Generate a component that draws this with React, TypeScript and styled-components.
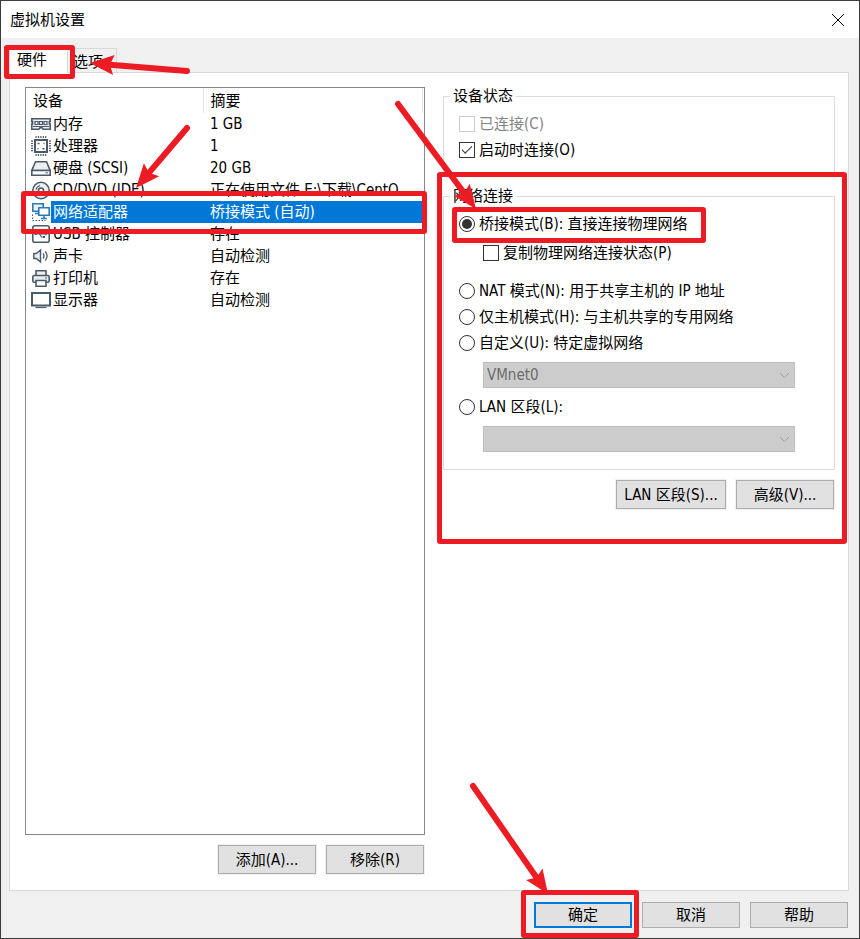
import React, { useState } from "react";
import styled, { createGlobalStyle, css } from "styled-components";

const GlobalStyle = createGlobalStyle`
  *, *::before, *::after { box-sizing: border-box; }
  body {
    margin: 0;
    background: #f0f0f0;
    color: #000;
    font-family: "DejaVu Sans Condensed", "Noto Sans CJK SC", sans-serif;
    font-size: 15px;
    line-height: 20px;
  }
  button, select, input { font: inherit; color: inherit; margin: 0; }
`;

const RED = "#ed1c24";
const INK = "#4b5a68";
const TINT = "#eceff1";
const BLUE = "#2b7bb9";

/* ---------- window frame ---------- */

const Dialog = styled.main`
  display: flex;
  flex-direction: column;
  min-height: 100vh;
  border: 1px solid #3c3c3c;
  overflow: hidden;
`;

const TitleBar = styled.header`
  display: flex;
  align-items: center;
  justify-content: space-between;
  height: 37px;
  padding: 0 14px 0 9px;
  background: #fff;
`;

const Title = styled.h1`
  margin: 0;
  font-size: 15px;
  font-weight: 400;
`;

const CloseButton = styled.button`
  display: flex;
  padding: 0;
  border: 0;
  background: none;
`;

const Body = styled.div`
  display: flex;
  flex: 1;
  flex-direction: column;
  padding: 9px 10px 10px 8px;
`;

const TabList = styled.div`
  display: flex;
  align-items: flex-end;
  height: 25px;
`;

const Tab = styled.button<{ $active?: boolean }>`
  position: relative;
  height: 24px;
  padding: 2px 13px 0 5px;
  border: 1px solid #d9d9d9;
  border-bottom: 0;
  border-left: 0;
  background: #f0f0f0;
  ${(p) =>
    p.$active &&
    css`
      z-index: 2;
      height: 26px;
      margin-bottom: -1px;
      padding: 0 20px 2px 7px;
      border-left: 1px solid #d9d9d9;
      background: #fff;
    `}
`;

const Pane = styled.section`
  display: grid;
  flex: 1;
  grid-template-columns: minmax(0, 400fr) minmax(0, 392fr);
  column-gap: 18px;
  padding: 14px 13px 16px 15px;
  border: 1px solid #d9d9d9;
  background: #fff;
`;

const Column = styled.div`
  display: flex;
  flex-direction: column;
`;

const Footer = styled.footer`
  display: flex;
  justify-content: flex-end;
  gap: 10px;
  padding: 11px 1px 0 0;
`;

/* ---------- buttons ---------- */

const ButtonRow = styled.div`
  display: flex;
  justify-content: flex-end;
  gap: 10px;
  padding: 10px 1px 0 0;
`;

const PushButton = styled.button<{ $wide?: boolean; $framed?: boolean; $primary?: boolean }>`
  width: ${(p) => (p.$wide ? 110 : 98)}px;
  height: ${(p) => (p.$framed ? 29 : 26)}px;
  padding: 0;
  border: ${(p) => (p.$primary ? "2px solid #0078d7" : "1px solid #adadad")};
  background: #e1e1e1;
  white-space: nowrap;
  ${(p) => p.$framed && "box-shadow: 0 0 0 1px #f0f0f0;"}
`;

/* ---------- device list ---------- */

const ListBox = styled.div`
  flex: 1;
  padding-right: 1px;
  border: 1px solid #828790;
`;

const DeviceTable = styled.table`
  width: 100%;
  border-collapse: collapse;
  table-layout: fixed;
`;

const HeadCell = styled.th<{ $first?: boolean }>`
  width: ${(p) => (p.$first ? "177px" : "auto")};
  height: 25px;
  padding: 0 0 0 7px;
  border-right: 1px solid #e5e5e5;
  font-weight: 400;
  text-align: left;
`;

const Row = styled.tr<{ $selected?: boolean }>`
  color: ${(p) => (p.$selected ? "#fff" : "#000")};
  --fill: ${(p) => (p.$selected ? "#0078d7" : "transparent")};
`;

const DeviceCell = styled.td`
  height: 22px;
  padding: 0 0 0 5px;
`;

const DeviceName = styled.div`
  position: relative;
  display: flex;
  align-items: center;
`;

const DeviceLabel = styled.span`
  flex: 1;
  padding-left: 2px;
  background: var(--fill);
  line-height: 22px;
  white-space: nowrap;
`;

const SummaryCell = styled.td`
  height: 22px;
  padding: 0 0 0 7px;
  background: var(--fill);
  line-height: 22px;
  white-space: nowrap;
`;

/* ---------- groups and fields ---------- */

const Group = styled.fieldset`
  position: relative;
  min-width: 0;
  margin: 0 0 9px;
  padding: 5px 39px 13px 15px;
  border: 1px solid #dcdcdc;
`;

const StatusGroup = styled(Group)`
  margin-top: -1px;
`;

const NetworkGroup = styled(Group)`
  margin-bottom: 0;
  padding-bottom: 11px;
`;

const Legend = styled.legend`
  margin-left: -9px;
  padding: 0 3px;
`;

const Option = styled.label<{ $nested?: boolean; $disabled?: boolean }>`
  position: relative;
  display: flex;
  align-items: center;
  gap: 4px;
  width: max-content;
  height: 26px;
  margin: ${(p) => (p.$nested ? "3px 0 12px 24px" : "0")};
  color: ${(p) => (p.$disabled ? "#838383" : "inherit")};
  white-space: nowrap;
`;

const CheckInput = styled.input.attrs({ type: "checkbox" })`
  display: grid;
  place-items: center;
  width: 16px;
  height: 16px;
  appearance: none;
  border: 1px solid #333;
  background: #fff;
  &:disabled { border-color: #ccc; }
  &:checked::after {
    content: "";
    width: 10px;
    height: 5px;
    margin-bottom: 4px;
    border: solid #333;
    border-width: 0 0 1px 1px;
    transform: rotate(-45deg);
  }
`;

const RadioInput = styled.input.attrs({ type: "radio" })`
  display: grid;
  place-items: center;
  width: 16px;
  height: 16px;
  appearance: none;
  border: 1px solid #333;
  border-radius: 50%;
  background: #fff;
  &:checked::after {
    content: "";
    width: 10px;
    height: 10px;
    border-radius: 50%;
    background: #333;
  }
`;

const SelectBox = styled.div`
  position: relative;
  display: flex;
  margin: 6px 0 6px 24px;
`;

const Select = styled.select`
  width: 100%;
  height: 26px;
  padding: 0 24px 0 3px;
  appearance: none;
  border: 1px solid #bfbfbf;
  border-radius: 0;
  background: #ccc;
  &:disabled { color: #6d6d6d; opacity: 1; }
`;

const Chevron = styled.svg`
  position: absolute;
  top: 10px;
  right: 5px;
  pointer-events: none;
`;

/* ---------- annotations over the dialog ---------- */

const Marked = styled.div`
  position: relative;
  display: flex;
`;

const Highlight = styled.span<{ $inset: string }>`
  position: absolute;
  z-index: 3;
  inset: ${(p) => p.$inset};
  border: 5px solid ${RED};
  border-radius: 3px;
  pointer-events: none;
`;

const ArrowSvg = styled.svg<{ $x: number; $y: number }>`
  position: absolute;
  z-index: 4;
  left: ${(p) => p.$x}px;
  top: ${(p) => p.$y}px;
  overflow: visible;
  pointer-events: none;
`;

/* Arrow whose tip is at (x, y) of its parent; (dx, dy) leads from tip to tail. */
function Arrow({ x, y, dx, dy }: { x: number; y: number; dx: number; dy: number }) {
  const len = Math.hypot(dx, dy);
  const ux = dx / len;
  const uy = dy / len;
  const at = (along: number, side: number) =>
    `${(ux * along - uy * side).toFixed(1)},${(uy * along + ux * side).toFixed(1)}`;
  return (
    <ArrowSvg $x={x} $y={y} width="1" height="1" aria-hidden="true">
      <line x1={ux * 14} y1={uy * 14} x2={dx} y2={dy} stroke={RED} strokeWidth="6" strokeLinecap="round" />
      <polygon points={`0,0 ${at(24, 10)} ${at(20, 0)} ${at(24, -10)}`} fill={RED} />
    </ArrowSvg>
  );
}

/* ---------- device icons ---------- */

const Glyph = styled.svg`
  flex: none;
  width: 20px;
  height: 20px;
  fill: none;
  stroke: ${INK};
  stroke-width: 1.6;
`;

const icons: Record<string, React.ReactNode> = {
  memory: (
    <>
      <path d="M.8 4.800h18.400v2.700h-.8v2.500h.8v5.200h-7l-1.200-1.500h-2l-1.200 1.500H.8V10h.8V7.500H.8z" fill={TINT} />
      <path d="M4 7.500h3v3H4zM8.500 7.500h3v3h-3zM13 7.500h3v3h-3z" strokeWidth="1.200" />
      <path d="M2 12.500h16" strokeWidth="1" />
    </>
  ),
  cpu: (
    <>
      <rect x="4" y="4" width="12" height="12" strokeWidth="2" fill="#fff" />
      <path d="M4.500 1h12M4.500 19h12M1 4.500v12M19 4.500v12" strokeWidth="2" strokeDasharray="1.200 1.200" />
      <path d="M6.500 7.500h2M11.500 12.800h2M12.500 7.500h1M6.500 12.800h1" strokeWidth="1.600" />
    </>
  ),
  disk: (
    <>
      <path d="M4.500 3.800h11l3.700 8.700H.8z" fill={TINT} />
      <path d="M.8 12.500h18.400v4.700H.8z" fill="#fff" />
      <path d="M14.500 14.800h2.500" strokeWidth="1" />
    </>
  ),
  disc: (
    <>
      <circle cx="10" cy="10.500" r="8.200" fill={TINT} />
      <circle cx="10" cy="10.500" r="2.500" fill="#fff" />
      <path d="M5 9.500q.8-3 4-4M15 11.500q-.8 3-4 4" strokeWidth="1.200" />
    </>
  ),
  network: (
    <g stroke={BLUE}>
      <path d="M1.800 1.800h10.400v7.400H1.800z" fill={TINT} />
      <path d="M4 11.500h4" />
      <path d="M7.800 5.800h10.400v7.400H7.800z" fill="#fff" />
      <path d="M13 13.200v2.500M10 16.500h6" />
      <path d="M1.500 12.500v6h13" stroke={INK} strokeWidth="1" strokeDasharray="1.500 1.500" />
    </g>
  ),
  usb: (
    <>
      <rect x="1.800" y="1.800" width="16.400" height="16.400" rx="2" />
      <path d="M4 10h11M6.500 10l2-3h2.500M8.500 10l2 3h2.500" strokeWidth="1.200" />
      <path d="M14.500 8.200l2.200 1.800-2.200 1.800zM3.500 9h2v2h-2zM11 6h2v2h-2zM12 12h2v2h-2z" fill={INK} stroke="none" />
    </>
  ),
  sound: (
    <>
      <path d="M2.800 7.500h2.500L9.500 4v12l-4.200-3.500H2.800z" fill={TINT} strokeWidth="1.400" />
      <path d="M12 7.500q2 2.500 0 5M14.300 5.500q3.500 4.500 0 9" strokeWidth="1.300" />
    </>
  ),
  printer: (
    <>
      <path d="M5 7.500V2.800h10v4.700M5 14.200H3.200q-1.400 0-1.400-1.400V9q0-1.500 1.400-1.500h13.600q1.400 0 1.400 1.500v3.800q0 1.400-1.400 1.400H15" fill={TINT} />
      <path d="M5 12.500h10v5.700H5z" fill="#fff" />
      <path d="M14 10h2" strokeWidth="1" />
    </>
  ),
  display: (
    <>
      <path d="M1 3h18v12.500H1z" strokeWidth="2" />
      <path d="M4.500 17.500h11" strokeWidth="1.200" />
    </>
  ),
};

const devices = [
  { icon: "memory", name: "内存", summary: "1 GB" },
  { icon: "cpu", name: "处理器", summary: "1" },
  { icon: "disk", name: "硬盘 (SCSI)", summary: "20 GB" },
  { icon: "disc", name: "CD/DVD (IDE)", summary: "正在使用文件 E:\\下载\\CentO..." },
  { icon: "network", name: "网络适配器", summary: "桥接模式 (自动)" },
  { icon: "usb", name: "USB 控制器", summary: "存在" },
  { icon: "sound", name: "声卡", summary: "自动检测" },
  { icon: "printer", name: "打印机", summary: "存在" },
  { icon: "display", name: "显示器", summary: "自动检测" },
];

function DropDown({ label, value }: { label: string; value: string }) {
  return (
    <SelectBox>
      <Select aria-label={label} disabled defaultValue={value}>
        <option value={value}>{value}</option>
      </Select>
      <Chevron width="11" height="7" fill="none" stroke="#a0a0a0" aria-hidden="true">
        <path d="M1 1l4.500 4.500L10 1" />
      </Chevron>
    </SelectBox>
  );
}

export default function App() {
  const [mode, setMode] = useState("bridged");
  const radio = (value: string) => ({
    name: "mode",
    value,
    checked: mode === value,
    onChange: () => setMode(value),
  });

  return (
    <>
      <GlobalStyle />
      <Dialog>
        <TitleBar>
          <Title>虚拟机设置</Title>
          <CloseButton aria-label="关闭">
            <svg width="14" height="14" stroke="#000" fill="none" aria-hidden="true">
              <path d="M1 1l12 12M13 1L1 13" />
            </svg>
          </CloseButton>
        </TitleBar>
        <Body>
          <TabList role="tablist">
            <Tab $active role="tab" aria-selected="true">
              硬件
              <Highlight $inset="-3px -8px -6px -6px" />
              <Arrow x={80} y={15} dx={97} dy={8} />
            </Tab>
            <Tab role="tab" aria-selected="false">选项</Tab>
          </TabList>
          <Pane>
            <Column>
              <ListBox>
                <DeviceTable>
                  <thead>
                    <tr>
                      <HeadCell $first>设备</HeadCell>
                      <HeadCell>摘要</HeadCell>
                    </tr>
                  </thead>
                  <tbody>
                    {devices.map((d) => {
                      const selected = d.icon === "network";
                      return (
                        <Row key={d.icon} $selected={selected}>
                          <DeviceCell>
                            <DeviceName>
                              <Glyph viewBox="0 0 20 20" aria-hidden="true">{icons[d.icon]}</Glyph>
                              <DeviceLabel>{d.name}</DeviceLabel>
                              {selected && (
                                <>
                                  <Highlight $inset="-10px -224px -11px -10px" />
                                  <Arrow x={105} y={-13} dx={51} dy={-60} />
                                </>
                              )}
                            </DeviceName>
                          </DeviceCell>
                          <SummaryCell>{d.summary}</SummaryCell>
                        </Row>
                      );
                    })}
                  </tbody>
                </DeviceTable>
              </ListBox>
              <ButtonRow>
                <PushButton $framed>添加(A)...</PushButton>
                <PushButton $framed>移除(R)</PushButton>
              </ButtonRow>
            </Column>
            <Column>
              <StatusGroup>
                <Legend>设备状态</Legend>
                <Option $disabled>
                  <CheckInput disabled />
                  已连接(C)
                </Option>
                <Option>
                  <CheckInput defaultChecked />
                  启动时连接(O)
                </Option>
              </StatusGroup>
              <NetworkGroup>
                <Legend>网络连接</Legend>
                <Option>
                  <RadioInput {...radio("bridged")} />
                  桥接模式(B): 直接连接物理网络
                  <Highlight $inset="-4px -18px -6px -7px" />
                  <Arrow x={17} y={-2} dx={-78} dy={-105} />
                </Option>
                <Option $nested>
                  <CheckInput />
                  复制物理网络连接状态(P)
                </Option>
                <Option>
                  <RadioInput {...radio("nat")} />
                  NAT 模式(N): 用于共享主机的 IP 地址
                </Option>
                <Option>
                  <RadioInput {...radio("host")} />
                  仅主机模式(H): 与主机共享的专用网络
                </Option>
                <Option>
                  <RadioInput {...radio("custom")} />
                  自定义(U): 特定虚拟网络
                </Option>
                <DropDown label="特定虚拟网络" value="VMnet0" />
                <Option>
                  <RadioInput {...radio("lan")} />
                  LAN 区段(L):
                </Option>
                <DropDown label="LAN 区段" value="" />
                <Highlight $inset="-34px -13px -75px -7px" />
              </NetworkGroup>
              <ButtonRow>
                <PushButton $framed $wide>LAN 区段(S)...</PushButton>
                <PushButton $framed>高级(V)...</PushButton>
              </ButtonRow>
            </Column>
          </Pane>
          <Footer>
            <Marked>
              <PushButton $primary>确定</PushButton>
              <Highlight $inset="-12px -7px -10px -13px" />
              <Arrow x={14} y={-8} dx={-75} dy={-108} />
            </Marked>
            <PushButton>取消</PushButton>
            <PushButton>帮助</PushButton>
          </Footer>
        </Body>
      </Dialog>
    </>
  );
}
